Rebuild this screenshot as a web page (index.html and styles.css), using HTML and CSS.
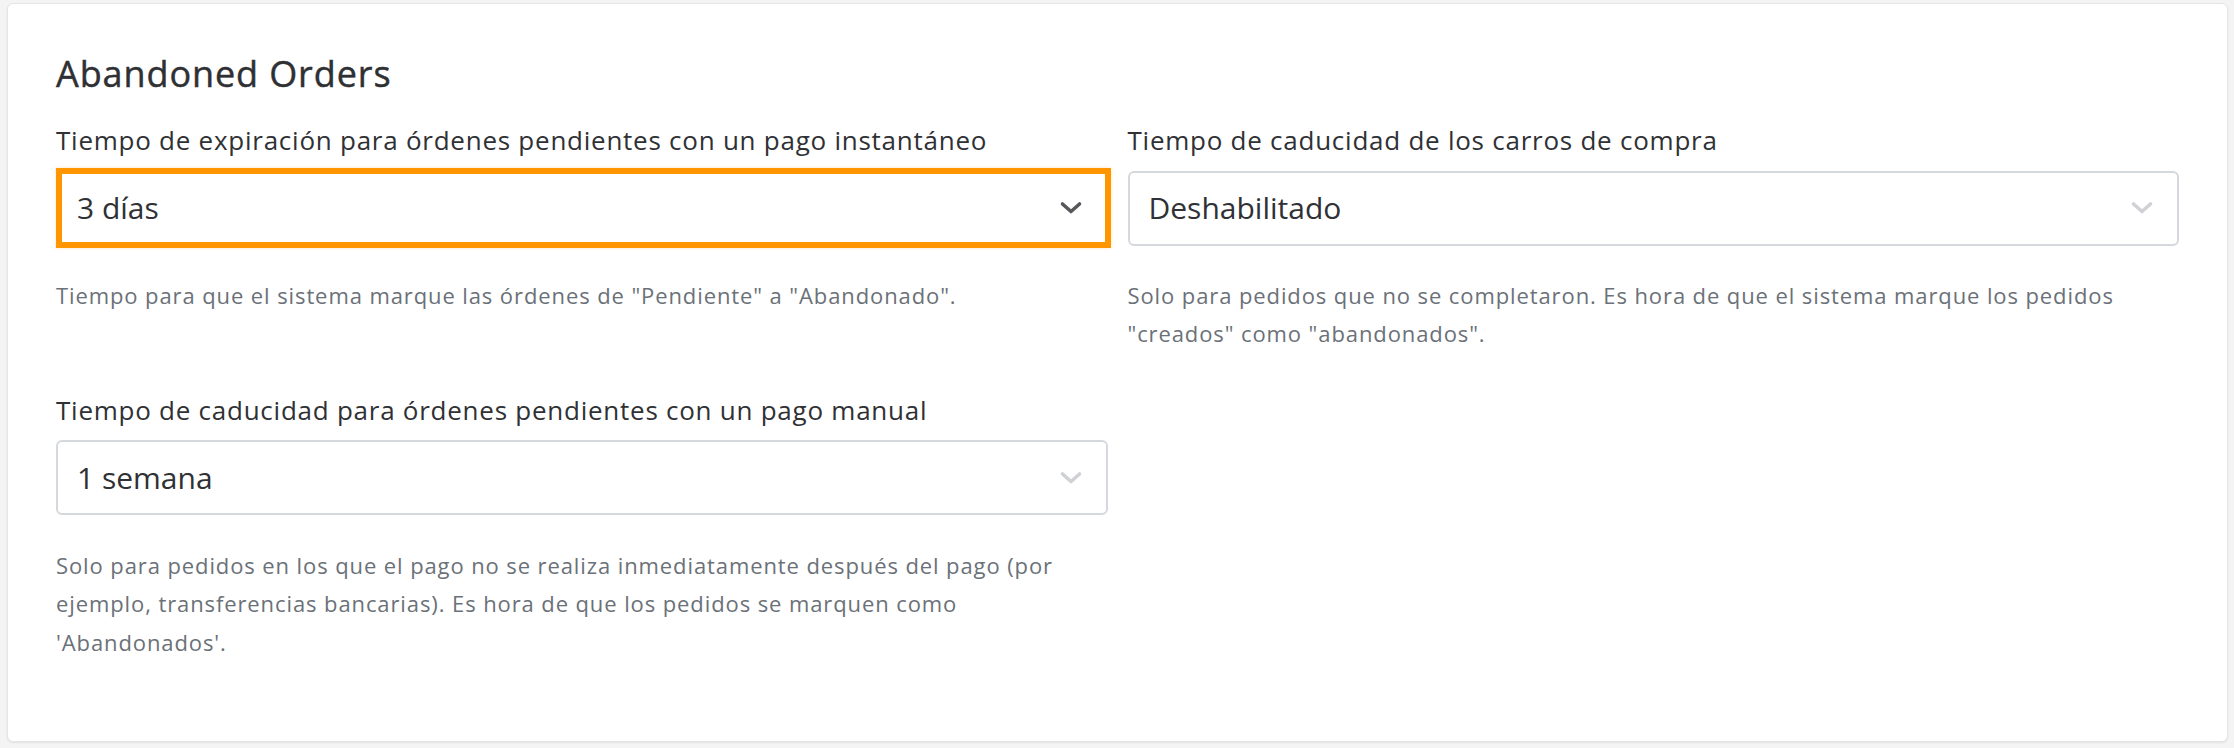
FILE: index.html
```html
<!DOCTYPE html>
<html lang="es">
<head>
<meta charset="utf-8">
<title>Abandoned Orders</title>
<link rel="stylesheet" href="styles.css">
</head>
<body>
<section class="card">
  <h2 class="card-title">Abandoned Orders</h2>
  <div class="fields">
    <div class="field">
      <label class="field-label">Tiempo de expiración para órdenes pendientes con un pago instantáneo</label>
      <div class="select is-highlighted">
        <span class="select-value">3 días</span>
        <svg class="chevron chevron-dark" width="24" height="14" viewBox="0 0 24 14"><path d="M3.5 3 L12 10.5 L20.5 3" fill="none" stroke="currentColor" stroke-width="3.6" stroke-linecap="round" stroke-linejoin="round"/></svg>
      </div>
      <p class="field-help">Tiempo para que el sistema marque las órdenes de "Pendiente" a "Abandonado".</p>
    </div>
    <div class="field">
      <label class="field-label">Tiempo de caducidad de los carros de compra</label>
      <div class="select">
        <span class="select-value">Deshabilitado</span>
        <svg class="chevron" width="24" height="14" viewBox="0 0 24 14"><path d="M3.5 3 L12 10.5 L20.5 3" fill="none" stroke="currentColor" stroke-width="3.6" stroke-linecap="round" stroke-linejoin="round"/></svg>
      </div>
      <p class="field-help">Solo para pedidos que no se completaron. Es hora de que el sistema marque los pedidos "creados" como "abandonados".</p>
    </div>
    <div class="field">
      <label class="field-label">Tiempo de caducidad para órdenes pendientes con un pago manual</label>
      <div class="select">
        <span class="select-value">1 semana</span>
        <svg class="chevron" width="24" height="14" viewBox="0 0 24 14"><path d="M3.5 3 L12 10.5 L20.5 3" fill="none" stroke="currentColor" stroke-width="3.6" stroke-linecap="round" stroke-linejoin="round"/></svg>
      </div>
      <p class="field-help">Solo para pedidos en los que el pago no se realiza inmediatamente después del pago (por ejemplo, transferencias bancarias). Es hora de que los pedidos se marquen como 'Abandonados'.</p>
    </div>
  </div>
</section>
</body>
</html>
```
FILE: styles.css
```css
html, body {
  margin: 0;
  padding: 0;
}
body {
  background: #f4f4f5;
  padding: 3px 6px 6px 7px;
  font-family: "Open Sans", "Liberation Sans", Arial, sans-serif;
  color: #2f3135;
}
.card {
  background: #ffffff;
  border: 1px solid #e4e5e7;
  border-radius: 6px;
  box-shadow: 0 1px 2px rgba(0, 0, 0, 0.08);
  padding: 46px 48px 80px 48px;
  height: 739px;
  box-sizing: border-box;
}
.card-title {
  margin: 0 0 26px 0;
  font-size: 36px;
  line-height: 48px;
  font-weight: 400;
  letter-spacing: 0.9px;
  -webkit-text-stroke: 0.45px currentColor;
  color: #2f3033;
}
.fields {
  display: grid;
  grid-template-columns: 1fr 1fr;
  column-gap: 20px;
  row-gap: 41px;
  align-items: start;
}
.field {
  display: flex;
  flex-direction: column;
  min-width: 0;
}
.field-label {
  display: block;
  font-size: 26px;
  line-height: 32px;
  letter-spacing: 0.75px;
  color: #2f3135;
  margin-bottom: 14.5px;
}
.select {
  position: relative;
  display: flex;
  align-items: center;
  height: 75px;
  box-sizing: border-box;
  border: 2px solid #d5d8dc;
  border-radius: 6px;
  padding: 0 23px 0 19px;
  background: #fff;
}
.select-value {
  font-size: 30px;
  line-height: 40px;
  color: #2f3135;
}
.chevron {
  margin-left: auto;
  color: #cfd1d4;
  flex: none;
}
.chevron-dark {
  color: #56585c;
}
.is-highlighted::after {
  content: "";
  position: absolute;
  top: -5px;
  bottom: -4px;
  left: -2px;
  right: -5px;
  border: 6px solid #ff9600;
  box-shadow: 0 0 3px rgba(255, 170, 60, 0.35);
  pointer-events: none;
}
.field-help {
  margin: 30.5px 0 0 0;
  font-size: 22px;
  line-height: 38.4px;
  letter-spacing: 0.9px;
  color: #6b7178;
}
```
